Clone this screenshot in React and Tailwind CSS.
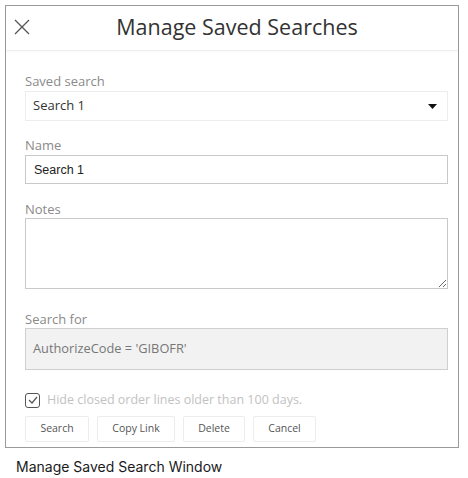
export default function App() {
  const label = "block text-[13px] leading-[18px] text-[#8a8a8a] font-['Open_Sans',sans-serif]";
  const btn =
    "h-[26px] border border-[#ececec] rounded-[2px] bg-white text-[10.5px] text-[#555] font-['Open_Sans',sans-serif]";

  return (
    <div className="w-[468px] h-[478px] bg-white pt-[5px] pl-[5px]">
      <div className="w-[454px] h-[443px] border border-[#9a9a9a] flex flex-col">
        {/* Header */}
        <div className="h-[45px] flex items-center pl-[8px] pr-[14px] pb-[3px] border-b border-[#efefef] shadow-[0_1px_2px_rgba(0,0,0,0.03)]">
          <svg width="16" height="16" viewBox="0 0 16 16" className="shrink-0">
            <path d="M1 1 L15 15 M15 1 L1 15" stroke="#555" strokeWidth="1.3" />
          </svg>
          <div className="flex-1 text-center text-[21.5px] leading-[30px] text-[#333] font-['Open_Sans',sans-serif]">
            Manage Saved Searches
          </div>
        </div>

        {/* Body */}
        <div className="flex flex-col pl-[19px] pr-[10px] pt-[21px]">
          <label className={label}>Saved search</label>
          <div className="mt-[1px] h-[30px] border border-[#ededed] flex items-center justify-between pl-[7px] pr-[10px]">
            <span className="text-[13px] text-[#333] font-['Open_Sans',sans-serif]">Search 1</span>
            <svg width="9" height="5" viewBox="0 0 9 5">
              <path d="M0 0 H9 L4.5 5 Z" fill="#111" />
            </svg>
          </div>

          <label className={`${label} mt-[15px]`}>Name</label>
          <input
            className="mt-[1px] h-[29px] border border-[#c9c9c9] px-[8px] text-[12.5px] text-[#222] font-['Liberation_Sans',Arial,sans-serif] outline-none"
            defaultValue="Search 1"
          />

          <label className={`${label} mt-[16px]`}>Notes</label>
          <textarea className="mt-0 h-[71px] border border-[#c9c9c9] px-[8px] py-[4px] text-[13px] outline-none" />

          <label className={`${label} mt-[21px]`}>Search for</label>
          <div className="h-[42px] border border-[#cfcfcf] bg-[#f2f2f2] flex items-center pl-[7px] text-[12.8px] text-[#777] font-['Open_Sans',sans-serif]">
            AuthorizeCode = 'GIBOFR'
          </div>

          <div className="mt-[21px] h-[18px] flex items-center gap-[7px]">
            <div className="w-[15px] h-[15px] border border-[#555] rounded-[3px] flex items-center justify-center">
              <svg width="10" height="8" viewBox="0 0 10 8">
                <path d="M1 4 L4 7 L9 1" stroke="#555" strokeWidth="1.2" fill="none" />
              </svg>
            </div>
            <span className="text-[12.5px] text-[#c2c2c2] font-['Open_Sans',sans-serif]">
              Hide closed order lines older than 100 days.
            </span>
          </div>

          <div className="mt-[7px] flex gap-[8px]">
            <button className={`${btn} w-[64px]`}>Search</button>
            <button className={`${btn} w-[78px]`}>Copy Link</button>
            <button className={`${btn} w-[62px]`}>Delete</button>
            <button className={`${btn} w-[63px]`}>Cancel</button>
          </div>
        </div>
      </div>

      <div className="mt-[9px] pl-[11px] text-[14px] leading-[20px] text-[#1a1a1a] font-['Inter',sans-serif]">
        Manage Saved Search Window
      </div>
    </div>
  );
}
